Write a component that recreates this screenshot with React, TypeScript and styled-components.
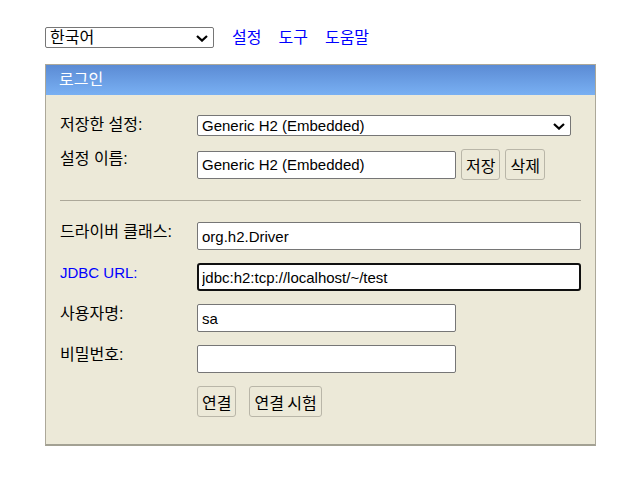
import styled, { createGlobalStyle } from 'styled-components'

const GlobalStyle = createGlobalStyle`
  html, body {
    margin: 0;
    padding: 0;
    background: #fff;
  }
  body {
    font-family: "Liberation Sans", "Noto Sans CJK KR", sans-serif;
    font-size: 15px;
    color: #000;
  }
`

// hangul renders a touch larger than latin text in the original
const KO_SIZE = 16
const LATIN_SIZE = 15

const Page = styled.div`
  padding: 27px 0 0 45px;
  width: 551px;
`

const TopBar = styled.div`
  display: flex;
  align-items: center;
  gap: 17px;
  height: 21px;
  margin-bottom: 16px;
`

const SelectWrap = styled.div<{ $width: number; $height: number }>`
  position: relative;
  width: ${(p) => p.$width}px;
  height: ${(p) => p.$height}px;
  flex: none;
`

const NativeSelect = styled.select<{ $size: number }>`
  appearance: none;
  width: 100%;
  height: 100%;
  box-sizing: border-box;
  border: 1px solid #767676;
  border-radius: 2px;
  background: #fff;
  font-family: inherit;
  font-size: ${(p) => p.$size}px;
  color: #000;
  padding: 0 24px 0 4px;
  line-height: 18px;
  margin: 0;
`

const Chevron = styled.svg`
  position: absolute;
  right: 6px;
  top: 50%;
  margin-top: -3px;
  pointer-events: none;
`

const NavLink = styled.a<{ $first?: boolean }>`
  color: #0000ff;
  text-decoration: none;
  font-size: ${KO_SIZE}px;
  line-height: 18px;
  margin-left: ${(p) => (p.$first ? '1px' : '0')};
`

const Panel = styled.div`
  border: 1px solid #aca899;
  border-bottom: 2px solid #a3a193;
  background: #ece9d8;
`

const PanelHeader = styled.div`
  height: 30px;
  background: linear-gradient(#5b8bd4, #79b0f3);
  color: #fff;
  font-size: ${KO_SIZE}px;
  line-height: 30px;
  padding-left: 13px;
`

const PanelBody = styled.div`
  padding: 20px 14px 27px 14px;
  display: flex;
  flex-direction: column;
`

const FormGrid = styled.div`
  display: grid;
  grid-template-columns: 137px 1fr;
  row-gap: 13px;
  align-items: start;
`

const Label = styled.div<{ $accent?: boolean }>`
  padding-top: 1px;
  line-height: 18px;
  font-size: ${(p) => (p.$accent ? LATIN_SIZE : KO_SIZE)}px;
  color: ${(p) => (p.$accent ? '#0000ff' : '#000')};
`

const Field = styled.div`
  display: flex;
  align-items: center;
  gap: 5px;
`

const TextInput = styled.input<{ $width: number; $focused?: boolean }>`
  box-sizing: border-box;
  width: ${(p) => p.$width}px;
  height: 28px;
  margin: 0;
  padding: 0 ${(p) => (p.$focused ? 3 : 4)}px;
  background: #fff;
  border: ${(p) => (p.$focused ? '2px solid #101010' : '1px solid #767676')};
  border-radius: ${(p) => (p.$focused ? 3 : 2)}px;
  font-family: inherit;
  font-size: ${LATIN_SIZE}px;
  color: #000;
  outline: none;
`

const Button = styled.button`
  box-sizing: border-box;
  height: 31px;
  margin: 0;
  padding: 0 4px;
  background: #ece9d8;
  border: 1px solid #b9b6a8;
  border-radius: 3px;
  font-family: inherit;
  font-size: ${KO_SIZE}px;
  color: #000;
  word-spacing: -1px;
`

const Divider = styled.hr`
  margin: 20px 0 21px 0;
  border: none;
  border-top: 1px solid #aca899;
  height: 0;
`

const ButtonRow = styled.div`
  display: flex;
  gap: 13px;
`

function Select({ width, height, value, size }: { width: number; height: number; value: string; size: number }) {
  return (
    <SelectWrap $width={width} $height={height}>
      <NativeSelect $size={size} defaultValue={value}>
        <option>{value}</option>
      </NativeSelect>
      <Chevron width="12" height="7" viewBox="0 0 12 7">
        <path d="M1 1 L6 5.6 L11 1" fill="none" stroke="#000" strokeWidth="2.2" />
      </Chevron>
    </SelectWrap>
  )
}

export default function App() {
  return (
    <>
      <GlobalStyle />
      <Page>
        <TopBar>
          <Select width={169} height={21} value="한국어" size={KO_SIZE} />
          <NavLink href="#" $first>설정</NavLink>
          <NavLink href="#">도구</NavLink>
          <NavLink href="#">도움말</NavLink>
        </TopBar>
        <Panel>
          <PanelHeader>로그인</PanelHeader>
          <PanelBody>
            <FormGrid>
              <Label>저장한 설정:</Label>
              <Field>
                <Select width={374} height={21} value="Generic H2 (Embedded)" size={LATIN_SIZE} />
              </Field>
              <Label>설정 이름:</Label>
              <Field>
                <TextInput $width={259} defaultValue="Generic H2 (Embedded)" />
                <Button>저장</Button>
                <Button>삭제</Button>
              </Field>
            </FormGrid>
            <Divider />
            <FormGrid>
              <Label>드라이버 클래스:</Label>
              <Field>
                <TextInput $width={384} defaultValue="org.h2.Driver" />
              </Field>
              <Label $accent>JDBC URL:</Label>
              <Field>
                <TextInput $width={384} $focused defaultValue="jdbc:h2:tcp://localhost/~/test" />
              </Field>
              <Label>사용자명:</Label>
              <Field>
                <TextInput $width={259} defaultValue="sa" />
              </Field>
              <Label>비밀번호:</Label>
              <Field>
                <TextInput $width={259} type="password" />
              </Field>
              <div />
              <ButtonRow>
                <Button>연결</Button>
                <Button>연결 시험</Button>
              </ButtonRow>
            </FormGrid>
          </PanelBody>
        </Panel>
      </Page>
    </>
  )
}
